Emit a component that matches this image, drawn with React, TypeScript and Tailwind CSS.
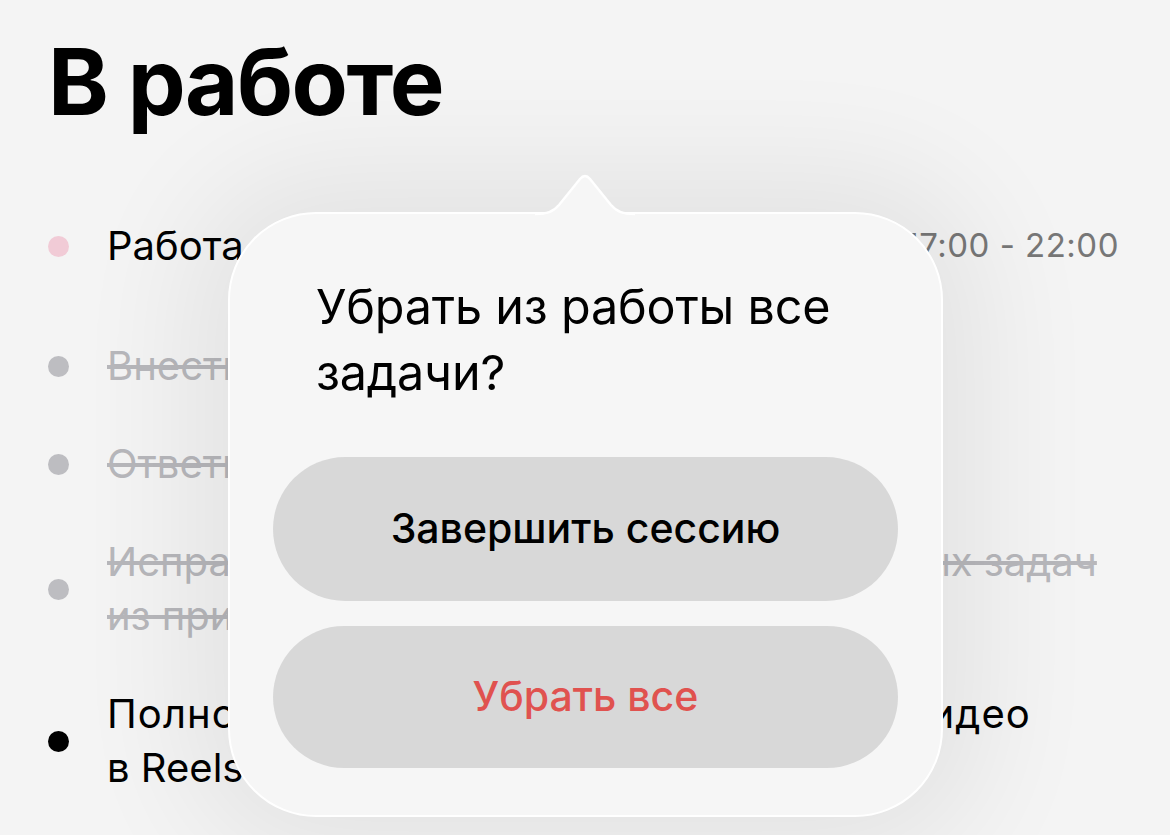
import React from 'react'

type Task = {
  id: number
  lines: string[]
  done: boolean
  dot: string
  time?: string
  extra?: string
}

const TASKS: Task[] = [
  { id: 1, lines: ['Работа'], done: false, dot: 'bg-[#f1cbd6]', time: '17:00 - 22:00' },
  { id: 2, lines: ['Внести правки в презентацию'], done: true, dot: 'bg-[#bdbdc1]' },
  { id: 3, lines: ['Ответить на письма клиентов'], done: true, dot: 'bg-[#bdbdc1]' },
  { id: 4, lines: ['Исправить отображение всех выполненных задач', 'из приложения'], done: true, dot: 'bg-[#bdbdc1]' },
  { id: 5, lines: ['Полностью смонтировать и загрузить видео', 'в Reels'], done: false, dot: 'bg-black', extra: 'tracking-[1.1px]' },
]

function PopoverArrow() {
  return (
    <svg
      className="absolute left-[305px] top-[-40px]"
      width="100"
      height="44"
      viewBox="0 0 100 44"
      fill="none"
    >
      <path
        d="M0 40 C12 40 18 38 24 31 L45 5 Q50 -1 55 5 L76 31 C82 38 88 40 100 40 L100 44 L0 44 Z"
        fill="#f6f6f6"
      />
      <path
        d="M0 40 C12 40 18 38 24 31 L45 5 Q50 -1 55 5 L76 31 C82 38 88 40 100 40"
        stroke="#ffffff"
        strokeWidth="2.5"
      />
    </svg>
  )
}

function ClearPopover() {
  return (
    <div className="absolute left-[228px] top-[212px] w-[715px] h-[605px] rounded-[88px] bg-[#f6f6f6] border-[2.5px] border-white shadow-[0_0_120px_40px_rgba(0,0,0,0.07)] px-[43px] pt-[60px] pb-[47px] flex flex-col">
      <PopoverArrow />
      <p className="pl-[43px] text-[48.5px] leading-[66px] text-black tracking-[-0.2px]">
        Убрать из работы все
        <br />
        задачи?
      </p>
      <div className="mt-auto flex flex-col gap-[25px]">
        <button className="h-[144px] w-full rounded-full bg-[#d8d8d8] text-[41px] font-medium text-black">
          Завершить сессию
        </button>
        <button className="h-[142px] w-full rounded-full bg-[#d8d8d8] text-[41px] font-medium text-[#e0524f]">
          Убрать все
        </button>
      </div>
    </div>
  )
}

export default function App() {
  return (
    <main
      className="relative w-[1170px] h-[835px] overflow-hidden bg-[#f4f4f4] text-black"
      style={{ fontFamily: 'Inter, "Noto Sans", sans-serif' }}
    >
      <div className="pl-[48px] pr-[51px] pt-[31px]">
        <h1 className="text-[92px] leading-[101px] font-bold tracking-[-1.5px]">В работе</h1>

        <ul className="mt-[87px] flex flex-col">
          {TASKS.map((t, i) => (
            <li
              key={t.id}
              className={`flex items-center ${i === 0 ? 'mb-[66px]' : 'mb-[44px]'}`}
            >
              <span className={`w-[21px] h-[21px] rounded-full shrink-0 ${t.dot}`}></span>
              <div
                className={`ml-[38px] flex-1 text-[40px] leading-[54px] whitespace-nowrap ${
                  t.done ? 'text-[#b7b7bb] line-through decoration-[#b7b7bb]' : 'text-black'
                }`}
              >
                {t.lines.map((l, j) => (
                  <div key={l} className={j === 0 ? t.extra : undefined}>
                    {l}
                  </div>
                ))}
              </div>
              {t.time && <span className="text-[33px] text-[#777777] tracking-[0.5px]">{t.time}</span>}
            </li>
          ))}
        </ul>
      </div>

      <ClearPopover />
    </main>
  )
}
